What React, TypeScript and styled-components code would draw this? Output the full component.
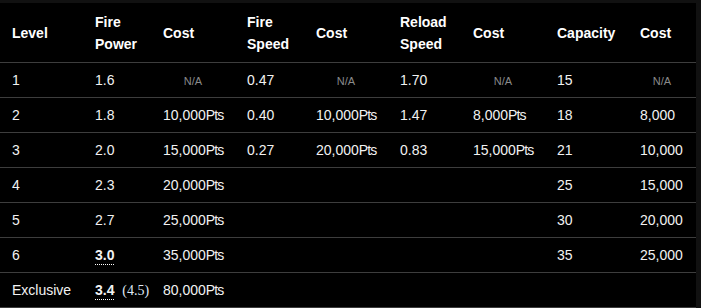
import React from "react";
import styled, { createGlobalStyle } from "styled-components";

const Global = createGlobalStyle`
  html, body { margin: 0; padding: 0; background: #111111; }
  body { font-family: "Liberation Sans", Arial, sans-serif; }
`;

const Wrap = styled.div`
  padding-top: 3px;
  width: 696px;
`;

const Table = styled.table`
  width: 696px;
  border-collapse: collapse;
  table-layout: fixed;
  background: #000000;
  color: #f2f2f2;
  font-size: 14px;
`;

const Th = styled.th`
  text-align: left;
  font-weight: bold;
  line-height: 22px;
  padding: 0 0 0 12px;
  height: 59px;
  border-bottom: 1px solid #3d3d3d;
  vertical-align: middle;
  color: #ffffff;
`;

const Td = styled.td<{ $center?: boolean }>`
  text-align: ${(p) => (p.$center ? "center" : "left")};
  padding: 0 0 0 ${(p) => (p.$center ? "0" : "12px")};
  height: 34px;
  border-bottom: 1px solid #3d3d3d;
  vertical-align: middle;
  white-space: nowrap;
`;

const NA = styled.span`
  font-size: 11px;
  color: #8a8a8a;
`;

const Pts = styled.span`
  letter-spacing: -0.9px;
`;

const Max = styled.b`
  font-weight: bold;
  border-bottom: 1px dotted #ffffff;
  padding-bottom: 1px;
`;

const Note = styled.span`
  font-family: "Liberation Serif", "Times New Roman", serif;
  color: #dfe8f5;
  margin-left: 4px;
`;

const widths = [83, 68, 84, 69, 84, 73, 84, 83, 68];

type Cell = string | null;

const rows: Cell[][] = [
  ["1", "1.6", "NA", "0.47", "NA", "1.70", "NA", "15", "NA"],
  ["2", "1.8", "10,000Pts", "0.40", "10,000Pts", "1.47", "8,000Pts", "18", "8,000"],
  ["3", "2.0", "15,000Pts", "0.27", "20,000Pts", "0.83", "15,000Pts", "21", "10,000"],
  ["4", "2.3", "20,000Pts", "", "", "", "", "25", "15,000"],
  ["5", "2.7", "25,000Pts", "", "", "", "", "30", "20,000"],
  ["6", "MAX3.0", "35,000Pts", "", "", "", "", "35", "25,000"],
  ["Exclusive", "EXC", "80,000Pts", "", "", "", "", "", ""],
];

function renderCell(v: Cell, i: number) {
  if (v === "NA")
    return (
      <Td key={i} $center>
        <NA>N/A</NA>
      </Td>
    );
  if (v === "MAX3.0")
    return (
      <Td key={i}>
        <Max>3.0</Max>
      </Td>
    );
  if (v === "EXC")
    return (
      <Td key={i}>
        <Max>3.4</Max> <Note>(4.5)</Note>
      </Td>
    );
  if (v && v.endsWith("Pts"))
    return (
      <Td key={i}>
        {v.slice(0, -3)}
        <Pts>Pts</Pts>
      </Td>
    );
  return <Td key={i}>{v}</Td>;
}

export default function App() {
  return (
    <>
      <Global />
      <Wrap>
        <Table>
          <colgroup>
            {widths.map((w, i) => (
              <col key={i} style={{ width: w }} />
            ))}
          </colgroup>
          <thead>
            <tr>
              <Th>Level</Th>
              <Th>
                Fire
                <br />
                Power
              </Th>
              <Th>Cost</Th>
              <Th>
                Fire
                <br />
                Speed
              </Th>
              <Th>Cost</Th>
              <Th>
                Reload
                <br />
                Speed
              </Th>
              <Th>Cost</Th>
              <Th>Capacity</Th>
              <Th>Cost</Th>
            </tr>
          </thead>
          <tbody>
            {rows.map((r, ri) => (
              <tr key={ri}>{r.map((c, ci) => renderCell(c, ci))}</tr>
            ))}
          </tbody>
        </Table>
      </Wrap>
    </>
  );
}
